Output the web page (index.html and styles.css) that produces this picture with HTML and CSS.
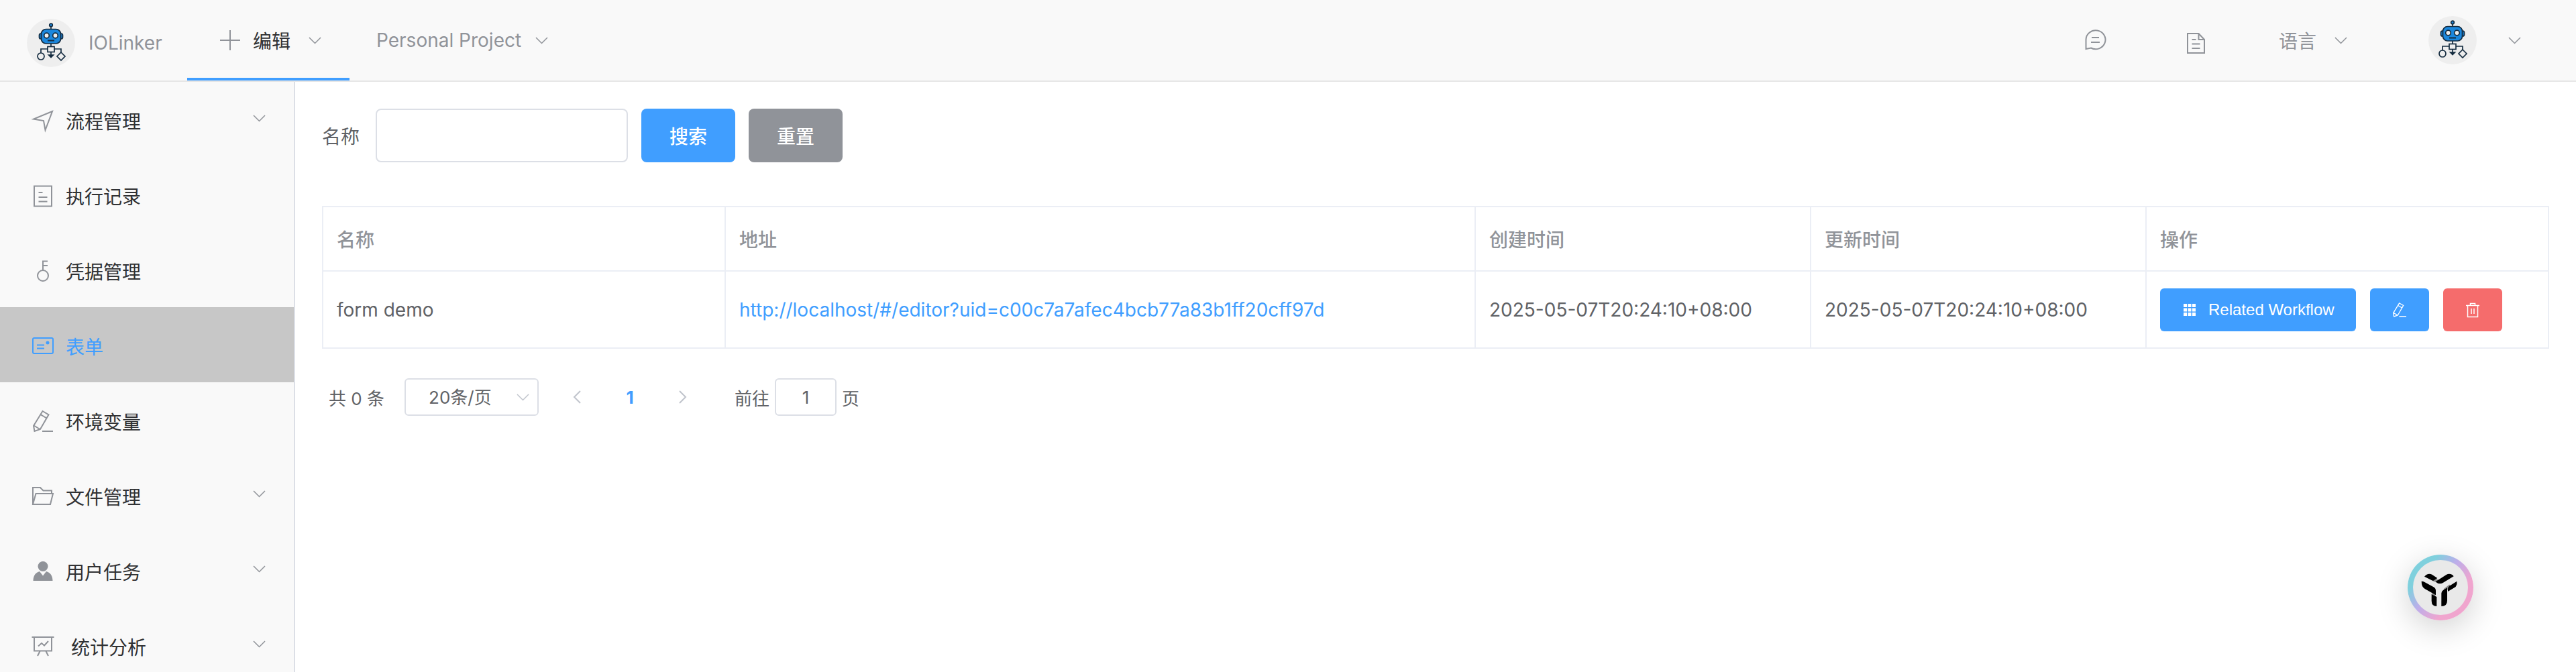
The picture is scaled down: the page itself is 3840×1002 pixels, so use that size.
FILE: index.html
```html
<!DOCTYPE html>
<html lang="zh-CN">
<head>
<meta charset="utf-8">
<title>IOLinker</title>
<link rel="stylesheet" href="styles.css">
</head>
<body>
<svg class="sprite" aria-hidden="true">
  <symbol id="chevron" viewBox="0 0 24 24"><path d="M4 8l8.500 8.500L21 8" stroke-width="1.500"/></symbol>
  <symbol id="robot" viewBox="0 0 72 72">
    <circle cx="36" cy="36" r="36" fill="#eee" stroke="none"/>
    <g stroke="#152c40" stroke-width="1.700" fill="none">
      <path d="M36 11v5M36 37v5M21 51v-6h10M41 45h10v6M36 50v7"/>
      <path d="M32.500 54l3.500 3.500 3.500-3.500z" fill="#152c40"/>
      <circle cx="36" cy="9.500" r="2.300" fill="#1b87dd"/>
      <rect x="18.500" y="22" width="5" height="8" rx="2.500" fill="#1b87dd"/>
      <rect x="48.500" y="22" width="5" height="8" rx="2.500" fill="#1b87dd"/>
      <rect x="21.500" y="15.500" width="29" height="21.500" rx="7" fill="#1b87dd"/>
      <circle cx="29.500" cy="25" r="3.800" fill="#eee"/>
      <circle cx="42.500" cy="25" r="3.800" fill="#eee"/>
      <path d="M31 32.500h10" stroke-width="2"/>
      <rect x="31" y="41.500" width="10" height="8"/>
      <circle cx="21" cy="56" r="5"/>
      <path d="M51 50l6 6-6 6-6-6z"/>
    </g>
  </symbol>
  <symbol id="pencil" viewBox="0 0 36 36"><path d="M17.500 3l9 5.300-12.500 21.700-8.500 3-1.500-8zM14.500 8.200l9 5.300M4.500 24.500l9 5.500M17 33h16"/></symbol>
</svg>

<div class="app">
  <header class="header">
    <a class="brand" href="#"><svg class="avatar"><use href="#robot"/></svg><span>IOLinker</span></a>
    <nav class="tabs">
      <button class="tab tab-active" type="button">
        <svg class="plus" viewBox="0 0 48 36"><path d="M9 18h30M24 3v30" stroke-width="2"/></svg>
        <span>编辑</span><svg class="chevron"><use href="#chevron"/></svg>
      </button>
      <button class="tab tab-project" type="button"><span>Personal Project</span><svg class="chevron"><use href="#chevron"/></svg></button>
    </nav>
    <div class="tools">
      <button class="tool" type="button" aria-label="消息"><svg class="icon" viewBox="0 0 36 36"><path d="M3.500 31V17a14.500 14 0 1 1 7.500 12.500zM12 14h11M11 21h13"/></svg></button>
      <button class="tool tool-doc" type="button" aria-label="文档"><svg class="icon" viewBox="0 0 36 36"><path d="M5 4h16.500l8.500 9v20H5zM21.500 4v9H30M11.500 13h6M11.500 19.500h12M11.500 26h12"/></svg></button>
      <button class="tab tab-lang" type="button"><span>语言</span><svg class="chevron"><use href="#chevron"/></svg></button>
      <button class="tab tab-user" type="button" aria-label="用户"><svg class="avatar"><use href="#robot"/></svg><svg class="chevron"><use href="#chevron"/></svg></button>
    </div>
  </header>

  <div class="body">
    <nav class="sidebar">
      <a class="item" href="#"><svg class="icon" viewBox="0 0 36 36"><path d="M32 4L4 15.500l15 2.500 2.500 14z"/></svg><span>流程管理</span><svg class="chevron"><use href="#chevron"/></svg></a>
      <a class="item" href="#"><svg class="icon" viewBox="0 0 36 36"><path d="M5 3.500h26v30H5zM11.500 13h6M11.500 20h13M11.500 26.500h13"/></svg><span>执行记录</span></a>
      <a class="item" href="#"><svg class="icon" viewBox="0 0 36 36"><circle cx="18" cy="25" r="8"/><path d="M18 17V3.500h7M18 10h7"/></svg><span>凭据管理</span></a>
      <a class="item item-active" href="#"><svg class="icon" viewBox="0 0 36 36"><rect x="3" y="6" width="30" height="23" rx="2"/><path d="M9 16.500h11M9 21.500h11"/><circle cx="25" cy="13" r="1.500" fill="currentColor"/></svg><span>表单</span></a>
      <a class="item" href="#"><svg class="icon"><use href="#pencil"/></svg><span>环境变量</span></a>
      <a class="item" href="#"><svg class="icon" viewBox="0 0 36 36"><path d="M3 30V5h11l4.500 4.500H31v4M3 30L7.500 14H33l-4 16z"/></svg><span>文件管理</span><svg class="chevron"><use href="#chevron"/></svg></a>
      <a class="item" href="#"><svg class="icon" viewBox="0 0 36 36"><g fill="currentColor" stroke="none"><circle cx="18" cy="10.500" r="7.500"/><path d="M3.500 32c0-8 4-12.500 9.500-14l5 6.500 5-6.500c5.500 1.500 9.500 6 9.500 14z"/></g></svg><span>用户任务</span><svg class="chevron"><use href="#chevron"/></svg></a>
      <a class="item item-wide" href="#"><svg class="icon" viewBox="0 0 36 36"><path d="M1.500 4h33M5 4v20.500h26V4M13.500 25L10 32M22.500 25L26 32M11 17.500l5-4.500 4 3.500 6-6.500"/></svg><span>统计分析</span><svg class="chevron"><use href="#chevron"/></svg></a>
    </nav>

    <main class="main">
      <form class="search">
        <label for="name">名称</label>
        <input class="field" id="name" type="text">
        <button class="btn btn-primary" type="button">搜索</button>
        <button class="btn btn-info" type="button">重置</button>
      </form>

      <table class="table">
        <colgroup><col class="col-name"><col><col class="col-time"><col class="col-time"><col class="col-ops"></colgroup>
        <thead><tr><th>名称</th><th>地址</th><th>创建时间</th><th>更新时间</th><th>操作</th></tr></thead>
        <tbody><tr>
          <td>form demo</td>
          <td><a class="link" href="#">http://localhost/#/editor?uid=c00c7a7afec4bcb77a83b1ff20cff97d</a></td>
          <td>2025-05-07T20:24:10+08:00</td>
          <td>2025-05-07T20:24:10+08:00</td>
          <td><div class="ops">
            <button class="btn btn-small btn-primary" type="button"><svg class="icon-small" viewBox="0 0 24 24"><path fill="currentColor" stroke="none" d="M3 3h5v5H3zM9.500 3h5v5h-5zM16 3h5v5h-5zM3 9.500h5v5H3zM9.500 9.500h5v5h-5zM16 9.500h5v5h-5zM3 16h5v5H3zM9.500 16h5v5h-5zM16 16h5v5h-5z"/></svg>Related Workflow</button>
            <button class="btn btn-small btn-primary" type="button" aria-label="编辑"><svg class="icon-small"><use href="#pencil"/></svg></button>
            <button class="btn btn-small btn-danger" type="button" aria-label="删除"><svg class="icon-small" viewBox="0 0 24 24"><path d="M2 5.500h20M8.500 5.500v-3h7v3M4.500 5.500v17h15v-17M10 10v8M14 10v8" stroke-width="1.500"/></svg></button>
          </div></td>
        </tr></tbody>
      </table>

      <div class="pager">
        <span>共 0 条</span>
        <div class="size"><select class="field" aria-label="每页条数"><option>20条/页</option></select><svg class="chevron"><use href="#chevron"/></svg></div>
        <button class="page" type="button" aria-label="上一页"><svg class="arrow" viewBox="0 0 24 24"><path d="M16 3l-9 9 9 9"/></svg></button>
        <button class="page page-current" type="button">1</button>
        <button class="page" type="button" aria-label="下一页"><svg class="arrow" viewBox="0 0 24 24"><path d="M8 3l9 9-9 9"/></svg></button>
        <label class="jump">前往<input class="field" type="text" value="1">页</label>
      </div>
    </main>
  </div>
</div>

<button class="assistant" type="button" aria-label="助手">
  <svg class="mark" viewBox="0 0 240 240">
    <path d="M88 84l24 10M90 158v-14M138 132l26-20" stroke="#8a8a8a" stroke-width="14"/>
    <g stroke="none" fill="#000">
      <path d="M48 71q10-12 22-12 7 0 12 3l24 16-15 10q-5 3-10 0z"/>
      <path d="M98 94l48-31q6-4 13-4 14 0 20 11l-48 29q-6 4-13 4-12 0-20-9z"/>
      <path d="M35 92q8 0 14 4l40 22q10 6 10 16v20l-49-28q-15-9-15-34z"/>
      <path d="M193 92q3 20-10 28l-30 18v-12q0-8 7-13z"/>
      <path d="M80 150l23 12v42q-23 0-23-24z"/>
      <path d="M124 204v-58q0-9 8-14l18-11v58q0 25-26 25z"/>
    </g>
  </svg>
</button>
</body>
</html>
```
FILE: styles.css
```css
* { box-sizing: border-box; }

body {
  margin: 0;
  font-family: Inter, "Noto Sans CJK SC", sans-serif;
  font-size: 28px;
  color: #606266;
  background: #fff;
}

button, input, select { font: inherit; color: inherit; margin: 0; }
button { border: 0; background: none; padding: 0; cursor: pointer; }
a { color: inherit; text-decoration: none; }
svg { flex: none; display: block; fill: none; stroke: currentColor; stroke-width: 2; }

.sprite { position: absolute; width: 0; height: 0; }

.app { display: flex; flex-direction: column; height: 100vh; overflow: hidden; }

.header {
  display: flex;
  flex: none;
  height: 122px;
  padding-left: 40px;
  background: #f9f9f9;
  border-bottom: 2px solid #e6e6e6;
  color: #909399;
}
.brand { display: flex; align-items: center; gap: 20px; width: 239px; padding-top: 8px; }
.avatar { width: 72px; height: 72px; }
.chevron { width: 24px; height: 24px; color: #909399; }

.tabs, .tools { display: flex; }
.tools { margin-left: auto; }
.tab { display: flex; align-items: center; gap: 24px; padding: 4px 40px 0; border-bottom: 4px solid transparent; }
.tab-active { color: #303133; border-color: #409eff; }
.tab-project { gap: 18px; }
.plus { width: 48px; height: 36px; color: #909399; margin-right: -14px; }
.tool { display: flex; align-items: center; width: 150px; padding-left: 57px; }
.tool-doc { padding-top: 8px; }
.tab-lang { padding-left: 48px; }
.tab-user { padding-left: 79px; padding-right: 80px; gap: 44px; }
.icon { width: 36px; height: 36px; color: #909399; }

.body { display: flex; flex: 1; min-height: 0; }

.sidebar { flex: none; width: 440px; overflow: hidden; background: #f9f9f9; border-right: 2px solid #dcdfe6; color: #303133; }
.item { display: flex; align-items: center; gap: 16px; height: 112px; padding: 4px 40px 0 46px; }
.item .chevron { margin-left: auto; margin-bottom: 8px; }
.item-wide { gap: 24px; }
.item-active, .item-active .icon { color: #409eff; }
.item-active { background: #c7c7c7; }

.main { flex: 1; min-width: 0; padding: 40px; }

.field { height: 80px; border: 2px solid #dcdfe6; border-radius: 8px; background: #fff; outline: 0; }

.search { display: flex; align-items: center; gap: 20px; margin-bottom: 65px; }
.search label { margin-right: 4px; }
.search .field { width: 376px; padding: 0 30px; }

.btn { height: 80px; padding: 0 42px; border-radius: 8px; color: #fff; font-weight: 500; }
.btn-primary { background: #409eff; }
.btn-info { background: #909399; }
.btn-danger { background: #f56c6c; }
.btn-small { display: flex; align-items: center; gap: 16px; height: 64px; padding: 0 32px; border-radius: 6px; font-family: "Liberation Sans", Arial, sans-serif; font-size: 24px; font-weight: 400; }
.icon-small { width: 24px; height: 24px; }

.table { width: 100%; table-layout: fixed; border-collapse: collapse; }
.col-name, .col-ops { width: 600px; }
.col-time { width: 500px; }
.table th, .table td { border: 2px solid #ebeef5; padding: 0 20px; text-align: left; }
.table th { height: 96px; color: #909399; font-weight: 500; }
.table td { height: 115px; }
.link { color: #409eff; }
.ops { display: flex; gap: 21px; }

.pager { display: flex; align-items: center; padding: 44px 10px; font-size: 26px; }
.pager .field { height: 56px; border-radius: 6px; }
.size { position: relative; margin: 0 19px 0 30px; }
.size .field { width: 200px; padding: 0 34px; appearance: none; }
.size .chevron { position: absolute; right: 12px; top: 16px; color: #c0c4cc; }
.page { display: flex; align-items: center; justify-content: center; width: 60px; height: 56px; margin: 0 9px; color: #c0c4cc; }
.page-current { color: #409eff; font-weight: 700; }
.arrow { width: 24px; height: 24px; }
.jump { display: flex; align-items: center; gap: 8px; margin-left: 39px; }
.jump .field { width: 92px; text-align: center; }

.assistant {
  position: fixed;
  right: 153px;
  bottom: 77px;
  display: flex;
  align-items: center;
  justify-content: center;
  width: 98px;
  height: 98px;
  border: 8px solid transparent;
  border-radius: 50%;
  background: linear-gradient(#e9e9e9, #e9e9e9) padding-box, linear-gradient(130deg, #7fd0dd 25%, #bcaeea 45%, #f0a5ce 70%) border-box;
  box-shadow: 0 12px 48px rgba(0, 0, 0, 0.18);
}
.mark { width: 80px; height: 80px; }
```
